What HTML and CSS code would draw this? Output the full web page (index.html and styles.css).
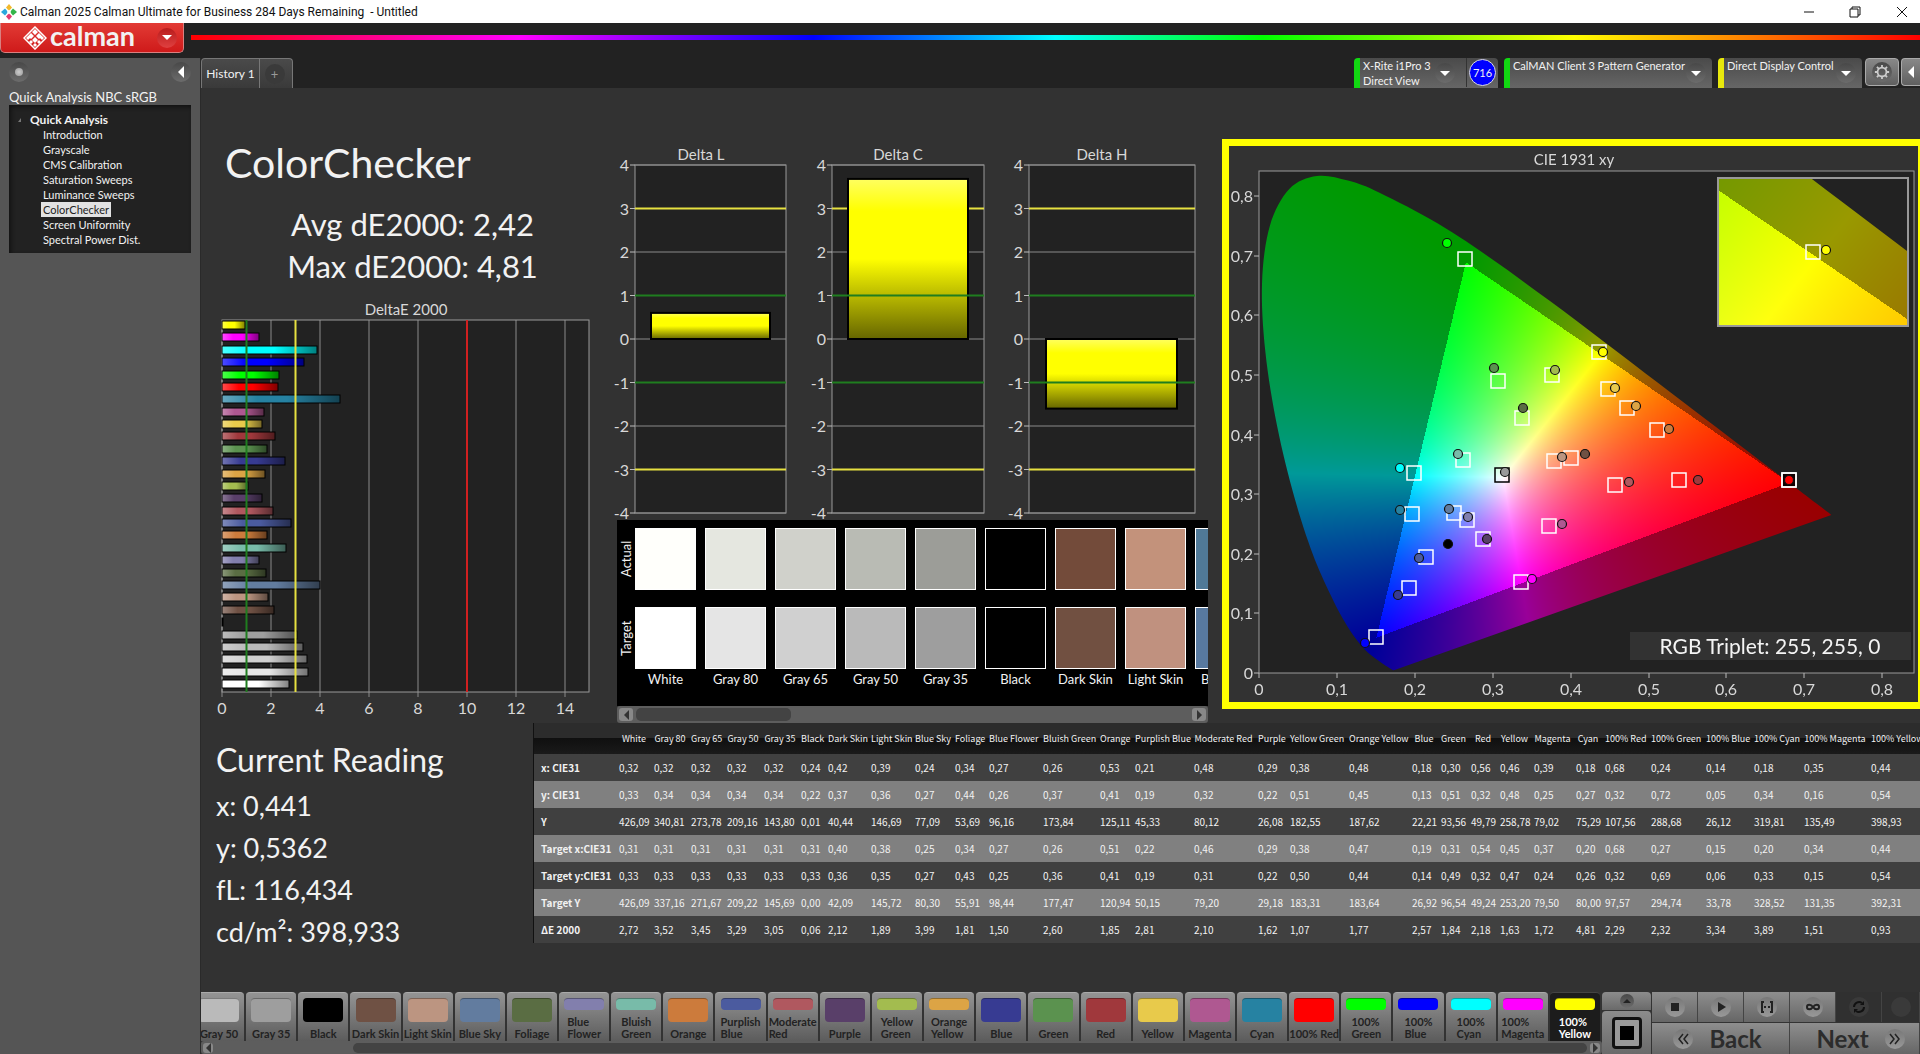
FILE: index.html
```html
<!DOCTYPE html>
<html lang="en">
<head>
<meta charset="utf-8">
<title>Calman 2025 Calman Ultimate for Business</title>
<link rel="stylesheet" href="styles.css">
</head>
<body>
<header class="titlebar">
  <svg class="app-icon" viewBox="0 0 16 16" aria-hidden="true">
    <path d="M8 0l3 3.500-3 3.500-3-3.500z" fill="#f2b92c"/>
    <path d="M4 4.500l3 3.500-3 3.500-4-3.500z" fill="#2ba7dd"/>
    <path d="M12 4.500l4 3.500-4 3.500-3-3.500z" fill="#35b44a"/>
    <path d="M8 9l3 3.500-3 3.500-3-3.500z" fill="#e33a6f"/>
    <path d="M8 5.500l2 2.500-2 2.500-2-2.500z" fill="#fff"/>
  </svg>
  <span class="window-title">Calman 2025 Calman Ultimate for Business 284 Days Remaining &nbsp;- Untitled</span>
  <div class="window-buttons">
    <button type="button" aria-label="Minimize"><svg viewBox="0 0 12 12"><path d="M1 6h10"/></svg></button>
    <button type="button" aria-label="Restore"><svg viewBox="0 0 12 12"><path d="M1 3h8v8H1zM3 3V1h8v8H9"/></svg></button>
    <button type="button" aria-label="Close"><svg viewBox="0 0 12 12"><path d="M1 1l10 10M11 1L1 11"/></svg></button>
  </div>
</header>

<div class="brandbar">
  <button type="button" class="brand">
    <svg class="brand-mark" viewBox="0 0 24 24" aria-hidden="true">
      <g fill="none" stroke="#fff" stroke-width="1.500"><path d="M12 1l11 11-11 11L1 12z"/></g>
      <g fill="#fff"><path d="M12 3l3 3-3 3-3-3zM8 7l3 3-3 3-3-3zM16 7l3 3-3 3-3-3zM12 11l3 3-3 3-3-3zM5 10l2 2-2 2-2-2zM19 10l2 2-2 2-2-2zM8 14l2 2-2 2-2-2zM16 14l2 2-2 2-2-2zM12 17l2 2-2 2-2-2z"/></g>
    </svg>
    <span class="brand-name">calman</span>
    <span class="knob knob-red"><i class="arrow-down"></i></span>
  </button>
  <div class="spectrum"></div>
</div>

<div class="app">
  <aside class="sidebar">
    <div class="sidebar-tools">
      <button type="button" class="knob" aria-label="Pin"><i class="dot"></i></button>
      <button type="button" class="knob" aria-label="Collapse"><i class="arrow-left"></i></button>
    </div>
    <h2 class="workflow">Quick Analysis NBC sRGB</h2>
    <nav class="tree">
      <p class="tree-root"><i class="tree-mark"></i>Quick Analysis</p>
      <ul>
        <li><a href="#">Introduction</a></li>
        <li><a href="#">Grayscale</a></li>
        <li><a href="#">CMS Calibration</a></li>
        <li><a href="#">Saturation Sweeps</a></li>
        <li><a href="#">Luminance Sweeps</a></li>
        <li><a href="#" class="current">ColorChecker</a></li>
        <li><a href="#">Screen Uniformity</a></li>
        <li><a href="#">Spectral Power Dist.</a></li>
      </ul>
    </nav>
  </aside>

  <div class="workspace">
    <div class="tabs">
      <div class="history">
        <button type="button" class="tab">History 1</button>
        <button type="button" class="tab-add" aria-label="Add history"><span class="knob">+</span></button>
      </div>
      <div class="devices">
        <div class="device device-green device-meter">
          <span>X-Rite i1Pro 3<br>Direct View</span>
          <button type="button" class="knob" aria-label="Meter menu"><i class="arrow-down"></i></button>
          <span class="badge-slot"><b class="badge">716</b></span>
        </div>
        <div class="device device-green device-source">
          <span>CalMAN Client 3 Pattern Generator</span>
          <button type="button" class="knob" aria-label="Source menu"><i class="arrow-down"></i></button>
        </div>
        <div class="device device-yellow device-display">
          <span>Direct Display Control</span>
          <button type="button" class="knob" aria-label="Display menu"><i class="arrow-down"></i></button>
        </div>
        <button type="button" class="tool" aria-label="Settings"><span class="knob"><svg viewBox="0 0 18 18" class="gear"><circle cx="9" cy="9" r="5"/><path d="M9 1v3M9 14v3M1 9h3M14 9h3M3.300 3.300l2.200 2.200M12.500 12.500l2.200 2.200M3.300 14.700l2.200-2.200M12.500 5.500l2.200-2.200"/></svg></span></button>
        <button type="button" class="tool tool-edge" aria-label="Collapse panel"><i class="arrow-left"></i></button>
      </div>
    </div>

    <main class="content">
      <div class="dashboard">
        <section class="summary">
          <h1>ColorChecker</h1>
          <p>Avg dE2000: 2,42</p>
          <p>Max dE2000: 4,81</p>
          <svg id="deltaE" class="chart" viewBox="0 0 416 432" role="img" aria-label="DeltaE 2000"></svg>
        </section>
        <section class="deltas">
          <svg id="deltaLCH" class="chart" viewBox="0 0 591 377" role="img" aria-label="Delta L, C and H"></svg>
          <div class="compare">
            <div class="compare-view">
              <div class="compare-side"><span>Actual</span><span>Target</span></div>
              <div class="compare-strip" id="strip"></div>
            </div>
            <div class="scrollbar">
              <button type="button" aria-label="Scroll left"><i class="mini-left"></i></button>
              <div class="track"><div class="thumb"></div></div>
              <button type="button" aria-label="Scroll right"><i class="mini-right"></i></button>
            </div>
          </div>
        </section>
        <section class="cie">
          <canvas id="gamut" width="689" height="556"></canvas>
          <svg id="cieAxes" viewBox="0 0 689 556" role="img" aria-label="CIE 1931 xy"></svg>
        </section>
      </div>

      <div class="readings">
        <section class="current-reading">
          <h2>Current Reading</h2>
          <p>x: 0,441</p>
          <p>y: 0,5362</p>
          <p>fL: 116,434</p>
          <p>cd/m²: 398,933</p>
        </section>
        <div class="table-wrap"><table id="results"></table></div>
      </div>
    </main>

    <footer class="footer">
      <div class="patterns">
        <div class="pattern-list" id="patterns"></div>
        <div class="scrollbar scrollbar-low">
          <button type="button" aria-label="Scroll left"><i class="mini-left"></i></button>
          <div class="track track-end"><div class="thumb"></div></div>
          <button type="button" aria-label="Scroll right"><i class="mini-right"></i></button>
        </div>
      </div>
      <div class="pattern-window">
        <button type="button" class="up" aria-label="Expand"><span class="knob"><i class="mini-up"></i></span></button>
        <button type="button" class="stop-big" aria-label="Pattern window"><i></i></button>
      </div>
      <div class="transport">
        <button type="button" aria-label="Stop"><span class="knob"><svg viewBox="0 0 16 16"><path d="M4 4h8v8H4z" fill="#222"/></svg></span></button>
        <button type="button" aria-label="Play"><span class="knob"><svg viewBox="0 0 16 16"><path d="M5 3l8 5-8 5z" fill="#222"/></svg></span></button>
        <button type="button" aria-label="Read series"><span class="knob"><svg viewBox="0 0 16 16"><path d="M5 3H3v10h2M11 3h2v10h-2M5 8h2M9 8h2" fill="none" stroke="#222" stroke-width="2"/></svg></span></button>
        <button type="button" aria-label="Read continuously"><span class="knob"><svg viewBox="0 0 16 16"><path d="M8 8C6 5 2 5 2 8s4 3 6 0 6-3 6 0-4 3-6 0" fill="none" stroke="#222" stroke-width="2"/></svg></span></button>
        <button type="button" class="off" aria-label="Refresh"><span class="knob"><svg viewBox="0 0 16 16"><path d="M3 8a5 5 0 0 1 8-4M13 8a5 5 0 0 1-8 4" fill="none" stroke="#111" stroke-width="2"/><path d="M9 6h4V2zM7 10H3v4z" fill="#111"/></svg></span></button>
        <button type="button" class="off" aria-label="Unused"><span class="knob"></span></button>
        <button type="button" class="step"><span class="knob"><svg viewBox="0 0 16 16"><path d="M8 3L4 8l4 5M13 3L9 8l4 5" fill="none" stroke="#222" stroke-width="1.500"/></svg></span>Back</button>
        <button type="button" class="step step-next">Next<span class="knob"><svg viewBox="0 0 16 16"><path d="M3 3l4 5-4 5M8 3l4 5-4 5" fill="none" stroke="#222" stroke-width="1.500"/></svg></span></button>
      </div>
    </footer>
  </div>
</div>
<script src="script.js"></script>
</body>
</html>
```
FILE: styles.css
```css
* { box-sizing: border-box; }
body {
  margin: 0;
  min-height: 100vh;
  display: flex;
  flex-direction: column;
  background: #222;
  color: #f2f2f2;
  font: 13px/16px Lato, "Open Sans", sans-serif;
  overflow-x: hidden;
}
button { margin: 0; padding: 0; border: 0; background: none; color: inherit; font: inherit; }
h1, h2, p, ul { margin: 0; padding: 0; font-weight: 400; }
ul { list-style: none; }

/* Window title */
.titlebar { display: flex; align-items: center; height: 23px; padding-left: 1px; background: #fff; color: #111; }
.app-icon { width: 16px; height: 16px; margin-right: 3px; }
.window-title { font: 12px/20px Roboto, "Open Sans", sans-serif; }
.window-buttons { display: flex; margin-left: auto; }
.window-buttons button { width: 46px; height: 20px; display: grid; place-items: center; }
.window-buttons button:last-child { width: 36px; margin-left: 6px; }
.window-buttons svg { width: 12px; height: 12px; fill: none; stroke: #111; stroke-width: 1; }

/* Brand */
.brandbar { display: flex; align-items: flex-start; height: 35px; }
.brand {
  display: flex; align-items: center; width: 184px; height: 30px; padding-left: 22px;
  background: linear-gradient(#e23b35, #cf1a1a);
  border: solid #d98080; border-width: 0 1px 1px; border-radius: 0 0 5px 5px;
}
.brand-mark { width: 24px; height: 24px; }
.brand-name { margin: 0 0 4px 3px; font: 700 27px/26px Lato, sans-serif; }
.spectrum {
  flex: 1; height: 5px; margin: 12px 0 0 7px;
  background: linear-gradient(90deg, #f00, #f0f 19%, #00f 36%, #0ff 50%, #0f0 62%, #ff0 80%, #f00);
}

/* Small round controls and arrows */
.knob {
  display: grid; place-items: center; flex: none; width: 20px; height: 20px; border-radius: 50%;
  background: linear-gradient(#484848, #6c6c6c);
}
.knob-red { margin: 0 6px 0 auto; background: linear-gradient(#b81c1c, #e04040); }
.arrow-down { border: 5px solid transparent; border-top-color: #fff; border-bottom: 0; }
.arrow-left { border: 6px solid transparent; border-right-color: #fff; border-left: 0; }
.mini-left { border: 5px solid transparent; border-right-color: #333; border-left: 0; }
.mini-right { border: 5px solid transparent; border-left-color: #333; border-right: 0; }
.mini-up { border: 4px solid transparent; border-bottom-color: #222; border-top: 0; }
.dot { width: 8px; height: 8px; border-radius: 50%; background: radial-gradient(#ccc, #999); }

.app { flex: 1; display: flex; }

/* Sidebar */
.sidebar { flex: none; width: 201px; padding: 4px 9px 0; background: #555; border-right: 1px solid #2a2a2a; }
.sidebar-tools { display: flex; justify-content: space-between; height: 24px; }
.workflow { margin-top: 3px; font-size: 13px; line-height: 16px; white-space: nowrap; }
.tree { height: 148px; padding: 7px 0 0 21px; background: #222; box-shadow: inset 2px 2px 4px #111; }
.tree-root { display: flex; align-items: center; gap: 9px; margin-left: -12px; font-weight: 700; font-size: 12px; line-height: 15px; }
.tree-mark { border: solid transparent; border-width: 0 0 4px 3px; border-bottom-color: #777; }
.tree ul { padding-left: 11px; font-size: 11px; line-height: 15px; }
.tree a { display: table; padding: 0 2px; color: #f2f2f2; text-decoration: none; }
.tree .current { background: #e2e2e2; color: #222; }

/* Tabs and devices */
.workspace { flex: 1; min-width: 0; display: flex; flex-direction: column; background: #323232; }
.tabs { display: flex; justify-content: space-between; height: 30px; background: #222; }
.history { display: flex; border: 1px solid #777; border-bottom: 0; border-radius: 4px 4px 0 0; background: linear-gradient(#4a4a4a, #3a3a3a); }
.tab { width: 58px; font-size: 12px; border-right: 1px solid #777; }
.tab-add { width: 32px; padding-right: 3px; display: grid; place-items: center; color: #999; }
.tab-add .knob { background: #3a3a3a; }
.devices { display: flex; gap: 6px; overflow: hidden; font-size: 11px; line-height: 15px; }
.device { display: flex; align-items: flex-start; justify-content: space-between; padding-left: 3px; border-left: 6px solid; border-radius: 4px 4px 0 0; background: linear-gradient(#4a4a4a, #666); }
.device > .knob { margin: 5px 6px 0 0; }
.device > span { white-space: nowrap; }
.device-green { border-left-color: #12d812; }
.device-yellow { border-left-color: #e8e80c; }
.device-meter { width: 144px; }
.device-source { width: 208px; }
.device-display { width: 144px; }
.badge-slot { padding: 1px 2px; border-left: 1px solid #333; }
.badge { display: grid; place-items: center; width: 27px; height: 27px; border: 1px solid #ddd; border-radius: 50%; background: #00f; font-weight: 400; }
.tool { width: 34px; height: 28px; display: grid; place-items: center; border: 1px solid #aaa; border-radius: 4px; background: linear-gradient(#888, #606060); margin-left: -3px; }
.tool-edge { width: 19px; margin-left: -4px; border-right: 0; border-radius: 4px 0 0 4px; }
.gear { width: 16px; height: 16px; fill: none; stroke: #ccc; stroke-width: 2; }

/* Dashboard */
.content { flex: 1; }
.dashboard { display: grid; grid-template-columns: minmax(0, 416fr) minmax(0, 605fr) minmax(0, 698fr); align-items: start; }
.chart { display: block; width: 100%; overflow: visible; }
.chart text, .cie text { font-family: Lato, "Open Sans", sans-serif; font-size: 16px; fill: #d8d8d8; }
.chart .title, .cie .title { font-size: 15px; }
.summary { padding-top: 49px; text-align: center; }
.summary h1 { padding-left: 24px; margin-bottom: 14px; font-size: 41px; line-height: 52px; text-align: left; }
.summary p { padding-left: 7px; font-size: 31px; line-height: 42px; }
.summary .chart { margin-top: 1px; }
.deltas { padding: 55px 14px 0 0; }

.compare-view { display: flex; height: 186px; padding-top: 8px; background: #000; overflow: hidden; }
.compare-side { flex: none; width: 18px; display: grid; grid-auto-rows: 62px; gap: 17px; justify-items: center; }
.compare-side span { writing-mode: vertical-rl; transform: rotate(180deg); text-align: center; }
.compare-strip { display: flex; gap: 9px; min-width: 0; overflow: hidden; }
.patch { flex: none; width: 61px; text-align: center; white-space: nowrap; }
.patch i { display: block; height: 62px; margin-bottom: 17px; border: 1px solid #fff; }
.patch i + i { margin-bottom: 2px; }

.scrollbar { display: flex; align-items: center; height: 17px; padding: 0 2px; background: #5d5d5d; border-radius: 3px; }
.scrollbar button { width: 14px; height: 13px; display: grid; place-items: center; background: #888; border-radius: 3px; }
.track { flex: 1; height: 13px; margin: 0 3px; }
.thumb { width: 28%; height: 13px; border-radius: 5px; background: #434343; }
.scrollbar-low { height: 13px; }
.scrollbar-low button, .scrollbar-low .track, .scrollbar-low .thumb { height: 10px; }
.scrollbar-low button { width: 10px; }
.track-end .thumb { width: 90%; margin-left: auto; }

.cie { display: grid; margin-top: 51px; border: 7px solid #ff0; border-right-width: 2px; }
.cie canvas, .cie svg { grid-area: 1 / 1; display: block; width: 100%; }
.cie .triplet { font-size: 21px; fill: #f4f4f4; }

/* Readings */
.readings { display: grid; grid-template-columns: minmax(0, 332fr) minmax(0, 1387fr); align-items: start; }
.current-reading { padding: 15px 0 0 15px; font-size: 27px; line-height: 42px; }
.current-reading h2 { margin-bottom: 3px; font-size: 32px; line-height: 44px; }
.table-wrap { border-left: 1px solid #111; overflow: hidden; }
#results { width: 100%; border-collapse: collapse; table-layout: fixed; font: 10px/16px "Noto Sans CJK SC", "Open Sans", sans-serif; }
#results th, #results td { height: 27px; padding: 0; text-align: left; font-weight: 400; white-space: nowrap; }
#results thead th { height: 31px; padding-right: 5px; font-size: 9px; text-align: center; background: linear-gradient(#2c2c2c 50%, #101010 50%, #1a1a1a); }
#results tbody th { padding-left: 7px; font-weight: 700; }
#results tbody tr { background: #404040; }
#results tbody tr:nth-child(even) { background: #808080; }

/* Footer */
.footer { display: flex; height: 62px; background: #333; }
.patterns { flex: 1; min-width: 0; overflow: hidden; }
.pattern-list { display: grid; grid-template-columns: repeat(27, minmax(0, 1fr)); margin-left: -7px; }
.pattern {
  display: flex; flex-direction: column; align-items: center; justify-content: space-between;
  height: 49px; margin-right: 2px; padding: 5px 0 1px; overflow: hidden;
  border-radius: 4px 4px 0 0; border-top: 1px solid #aaa;
  background: linear-gradient(#949494, #5c5c5c); color: #222; font-size: 11px; line-height: 12px; font-weight: 700; text-align: left;
}
.pattern i { width: 40px; height: 24px; border-radius: 4px; border-top: 1px solid #0005; }
.pattern .short { height: 12px; }
.pattern.selected { background: #1c1c1c; color: #fff; border-color: #444; }
.pattern-window { flex: none; width: 49px; display: grid; grid-template-rows: 18px 1fr; gap: 1px; }
.pattern-window button { display: grid; place-items: center; border-radius: 4px 4px 0 0; background: linear-gradient(#8c8c8c, #6a6a6a); }
.pattern-window .knob { width: 14px; height: 14px; }
.stop-big i { width: 30px; height: 32px; border: 3px solid #111; border-radius: 4px; background: linear-gradient(#000, #000) center / 14px 14px no-repeat, #999; }
.transport { flex: none; width: 268px; display: grid; grid-template-columns: repeat(5, 46px) 1fr; grid-template-rows: 30px 31px; gap: 1px 0; margin-left: 1px; }
.transport button { display: flex; align-items: center; justify-content: center; border-right: 1px solid #444; background: linear-gradient(#8e8e8e, #666); color: #2c2c2c; }
.transport .knob { background: linear-gradient(#777, #999); }
.transport svg { width: 16px; height: 16px; }
.transport .off { background: #303030; }
.transport .off .knob { background: #3a3a3a; }
.transport .step { grid-column: span 3; gap: 16px; padding-right: 6px; font-size: 24px; font-weight: 700; line-height: 28px; }
.transport .step-next { padding: 0 0 0 12px; }
```
FILE: script.js
```js
const NAMES = ['White', 'Gray 80', 'Gray 65', 'Gray 50', 'Gray 35', 'Black', 'Dark Skin', 'Light Skin', 'Blue Sky', 'Foliage',
  'Blue Flower', 'Bluish Green', 'Orange', 'Purplish Blue', 'Moderate Red', 'Purple', 'Yellow Green', 'Orange Yellow',
  'Blue', 'Green', 'Red', 'Yellow', 'Magenta', 'Cyan',
  '100% Red', '100% Green', '100% Blue', '100% Cyan', '100% Magenta', '100% Yellow'];
const COLORS = ['#ffffff', '#e5e5e5', '#d0d0d0', '#bababa', '#9e9e9e', '#000000', '#6f5144', '#bc9581', '#627c9f', '#5a6d43',
  '#827fad', '#78bba9', '#cc7b3c', '#4b5b9f', '#b0585f', '#593f69', '#a3bc4f', '#dca445',
  '#373b92', '#5b924f', '#a0383c', '#e8ca4b', '#af5891', '#2682a2',
  '#ff0000', '#00ff00', '#0000ff', '#00ffff', '#ff00ff', '#ffff00'];
const WIDTHS = [35, 37, 36, 37, 37, 27, 43, 44, 40, 34, 54, 57, 35, 59, 64, 32, 59, 63, 29, 30, 29, 34, 42, 29, 46, 55, 48, 50, 67, 49];
const ROWS = {
  'x: CIE31': '0,32 0,32 0,32 0,32 0,32 0,24 0,42 0,39 0,24 0,34 0,27 0,26 0,53 0,21 0,48 0,29 0,38 0,48 0,18 0,30 0,56 0,46 0,39 0,18 0,68 0,24 0,14 0,18 0,35 0,44',
  'y: CIE31': '0,33 0,34 0,34 0,34 0,34 0,22 0,37 0,36 0,27 0,44 0,26 0,37 0,41 0,19 0,32 0,22 0,51 0,45 0,13 0,51 0,32 0,48 0,25 0,27 0,32 0,72 0,05 0,34 0,16 0,54',
  'Y': '426,09 340,81 273,78 209,16 143,80 0,01 40,44 146,69 77,09 53,69 96,16 173,84 125,11 45,33 80,12 26,08 182,55 187,62 22,21 93,56 49,79 258,78 79,02 75,29 107,56 288,68 26,12 319,81 135,49 398,93',
  'Target x:CIE31': '0,31 0,31 0,31 0,31 0,31 0,31 0,40 0,38 0,25 0,34 0,27 0,26 0,51 0,22 0,46 0,29 0,38 0,47 0,19 0,31 0,54 0,45 0,37 0,20 0,68 0,27 0,15 0,20 0,34 0,44',
  'Target y:CIE31': '0,33 0,33 0,33 0,33 0,33 0,33 0,36 0,35 0,27 0,43 0,25 0,36 0,41 0,19 0,31 0,22 0,50 0,44 0,14 0,49 0,32 0,47 0,24 0,26 0,32 0,69 0,06 0,33 0,15 0,54',
  'Target Y': '426,09 337,16 271,67 209,22 145,69 0,00 42,09 145,72 80,30 55,91 98,44 177,47 120,94 50,15 79,20 29,18 183,31 183,64 26,92 96,54 49,24 253,20 79,50 80,00 97,57 294,74 33,78 328,52 131,35 392,31',
  'ΔE 2000': '2,72 3,52 3,45 3,29 3,05 0,06 2,12 1,89 3,99 1,81 1,50 2,60 1,85 2,81 2,10 1,62 1,07 1,77 2,57 1,84 2,18 1,63 1,72 4,81 2,29 2,32 3,34 3,89 1,51 0,93'
};
const DELTA_E = ROWS['ΔE 2000'].split(' ').map(v => parseFloat(v.replace(',', '.')));

const line = (x1, y1, x2, y2, color, w = 1) =>
  `<line x1="${x1}" y1="${y1}" x2="${x2}" y2="${y2}" stroke="${color}" stroke-width="${w}"/>`;
const label = (x, y, text, anchor = 'middle', cls = '') =>
  `<text x="${x}" y="${y}" text-anchor="${anchor}" class="${cls}">${text}</text>`;
const GRID = '#8a8a8a', GREEN = '#1f7d1f', YELLOW = '#e6e040';

/* Results table */
document.getElementById('results').innerHTML =
  `<colgroup><col style="width:85px">${WIDTHS.map(w => `<col style="width:${w}px">`).join('')}</colgroup>` +
  `<thead><tr><th></th>${NAMES.map(n => `<th scope="col">${n}</th>`).join('')}</tr></thead><tbody>` +
  Object.entries(ROWS).map(([name, values]) =>
    `<tr><th scope="row">${name}</th>${values.split(' ').map(v => `<td>${v}</td>`).join('')}</tr>`).join('') + '</tbody>';

/* Actual against target patches */
const ACTUAL = ['#fffffb', '#e5e7e0', '#d0d1cb', '#b9bbb4', '#9c9d98', '#000000', '#734b3a', '#c3927b', '#507997'];
const TARGET = ['#ffffff', '#e5e5e5', '#d0d0d0', '#bababa', '#9e9e9e', '#000000', '#715041', '#c0917f', '#58799f'];
document.getElementById('strip').innerHTML = ACTUAL.map((c, i) =>
  `<div class="patch"><i style="background:${c}"></i><i style="background:${TARGET[i]}"></i>${NAMES[i]}</div>`).join('');

/* Pattern buttons */
const TWO_LINES = [10, 11, 13, 14, 16, 17, 25, 26, 27, 28, 29];
document.getElementById('patterns').innerHTML = NAMES.map((n, i) => {
  if (i < 3) return '';
  const two = TWO_LINES.includes(i);
  return `<button type="button" class="pattern${i === 29 ? ' selected' : ''}"><i class="${two ? 'short' : ''}" style="background:${COLORS[i]}"></i><span>${two ? n.replace(' ', '<br>') : n.replace(' ', '&nbsp;')}</span></button>`;
}).join('');

/* DeltaE 2000 bars */
(() => {
  const x0 = 21, y0 = 32, w = 367, h = 372, unit = 24.5;
  let s = '<defs><linearGradient id="shade"><stop offset="0" stop-color="#fff" stop-opacity=".3"/><stop offset=".3" stop-color="#fff" stop-opacity="0"/><stop offset=".55" stop-opacity="0"/><stop offset="1" stop-opacity=".5"/></linearGradient></defs>';
  s += `<rect x="${x0}" y="${y0}" width="${w}" height="${h}" fill="#222"/>`;
  s += label(205, 27, 'DeltaE 2000', 'middle', 'title');
  for (let v = 0; v <= 14; v += 2) {
    const x = x0 + v * unit;
    s += line(x, y0, x, y0 + h + 5, GRID) + label(x, y0 + h + 22, v);
  }
  s += `<rect x="${x0}" y="${y0}" width="${w}" height="${h}" fill="none" stroke="#999"/>`;
  [...DELTA_E].reverse().forEach((v, i) => {
    const y = y0 + 1 + Math.round(i * 12.38), bw = Math.max(1, Math.round(v * unit));
    const c = COLORS[COLORS.length - 1 - i];
    s += `<rect x="${x0}" y="${y}" width="${bw}" height="8" fill="${c}"/><rect x="${x0}" y="${y}" width="${bw}" height="8" fill="url(#shade)" stroke="#000"/>`;
  });
  s += line(x0 + unit, y0, x0 + unit, y0 + h, GREEN, 2) + line(x0 + 3 * unit, y0, x0 + 3 * unit, y0 + h, YELLOW, 2) +
       line(x0 + 10 * unit, y0, x0 + 10 * unit, y0 + h, '#d02020', 2);
  document.getElementById('deltaE').innerHTML = s;
})();

/* Delta L, C, H */
(() => {
  const top = 22, unit = 43.5;
  let s = '<defs><linearGradient id="yellowBar" x2="0" y2="1"><stop offset="0" stop-color="#ffff60"/><stop offset=".2" stop-color="#ff0"/><stop offset=".5" stop-color="#ff0"/><stop offset="1" stop-color="#666600"/></linearGradient></defs>';
  const y = v => top + (4 - v) * unit;
  [['Delta L', 18, 151, 84, 34, 119, .6], ['Delta C', 215, 152, 281, 231, 120, 3.68], ['Delta H', 412, 166, 485, 429, 131, -1.6]]
    .forEach(([name, x, w, tx, bx, bw, val]) => {
      s += label(tx, 17, name, 'middle', 'title') + `<rect x="${x}" y="${top}" width="${w}" height="${8 * unit}" fill="#222" stroke="#999"/>`;
      for (let v = -4; v <= 4; v++) {
        s += line(x - 5, y(v), x, y(v), '#bbb') + label(x - 6, y(v) + 6, v, 'end');
        if (v % 2 === 0) s += line(x, y(v), x + w, y(v), GRID);
      }
      s += line(x, y(3), x + w, y(3), YELLOW, 2) + line(x, y(-3), x + w, y(-3), YELLOW, 2);
      s += `<rect x="${bx}" y="${y(Math.max(val, 0))}" width="${bw}" height="${Math.abs(val) * unit}" fill="url(#yellowBar)" stroke="#000" stroke-width="2"/>`;
      s += line(x, y(1), x + w, y(1), GREEN, 2) + line(x, y(-1), x + w, y(-1), GREEN, 2);
    });
  document.getElementById('deltaLCH').innerHTML = s;
})();

/* CIE 1931 diagram */
const PLOT = { x: 30, y: 25, w: 655, h: 502, ux: 779, uy: 596 };
const INSET = { x: 489, y: 32, w: 190, h: 148, zoom: 5, cx: .437, cy: .5375 };
const LOCUS = [[.1741, .005], [.1714, .0051], [.1644, .0109], [.1566, .0177], [.144, .0297], [.1355, .0399], [.1241, .0578], [.1096, .0868],
  [.0913, .1327], [.0687, .2007], [.0454, .295], [.0235, .4127], [.0082, .5384], [.0039, .6548], [.0139, .7502], [.0389, .812], [.0743, .8338],
  [.1142, .8262], [.1547, .8059], [.2296, .7543], [.3016, .6923], [.3731, .6245], [.4441, .5547], [.5125, .4866], [.5752, .4242], [.627, .3725],
  [.6658, .334], [.6915, .3083], [.719, .2809], [.7347, .2653]];

function colorAt(x, y) {
  const X = x, Y = y, Z = 1 - x - y;
  const r = 2.4935 * X - .9314 * Y - .4027 * Z, g = -.8295 * X + 1.7627 * Y + .0236 * Z, b = .0358 * X - .0762 * Y + .9569 * Z;
  const inside = r >= 0 && g >= 0 && b >= 0, k = (inside ? 255 : 153) / Math.max(r, g, b);
  return [Math.max(0, r) * k, Math.max(0, g) * k, Math.max(0, b) * k];
}

function drawField(ctx, ox, oy, w, h, toXY, toPx) {
  const layer = document.createElement('canvas');
  layer.width = w; layer.height = h;
  const lc = layer.getContext('2d'), img = lc.createImageData(w, h);
  for (let j = 0, p = 0; j < h; j++) for (let i = 0; i < w; i++, p += 4) {
    const c = colorAt(...toXY(i, j));
    img.data[p] = c[0]; img.data[p + 1] = c[1]; img.data[p + 2] = c[2]; img.data[p + 3] = 255;
  }
  lc.putImageData(img, 0, 0);
  ctx.save();
  ctx.beginPath(); ctx.rect(ox, oy, w, h); ctx.clip();
  ctx.fillStyle = '#222'; ctx.fillRect(ox, oy, w, h);
  const pts = LOCUS.map(([x, y]) => toPx(x, y).map((v, k) => v + (k ? oy : ox)));
  ctx.beginPath(); ctx.moveTo(...pts[0]);
  for (let k = 0; k < pts.length - 1; k++) {
    const a = pts[Math.max(0, k - 1)], b = pts[k], c = pts[k + 1], d = pts[Math.min(pts.length - 1, k + 2)];
    ctx.bezierCurveTo(b[0] + (c[0] - a[0]) / 6, b[1] + (c[1] - a[1]) / 6, c[0] - (d[0] - b[0]) / 6, c[1] - (d[1] - b[1]) / 6, c[0], c[1]);
  }
  ctx.closePath(); ctx.clip();
  ctx.drawImage(layer, ox, oy);
  ctx.restore();
}

(() => {
  const ctx = document.getElementById('gamut').getContext('2d');
  drawField(ctx, PLOT.x, PLOT.y, PLOT.w, PLOT.h,
    (i, j) => [i / PLOT.ux, (PLOT.h - j) / PLOT.uy], (x, y) => [x * PLOT.ux, PLOT.h - y * PLOT.uy]);
  const zx = PLOT.ux * INSET.zoom, zy = PLOT.uy * INSET.zoom;
  drawField(ctx, INSET.x, INSET.y, INSET.w, INSET.h,
    (i, j) => [INSET.cx + (i - INSET.w / 2) / zx, INSET.cy - (j - INSET.h / 2) / zy],
    (x, y) => [(x - INSET.cx) * zx + INSET.w / 2, INSET.h / 2 - (y - INSET.cy) * zy]);
})();

(() => {
  const targets = [[.264, .694], [.307, .49], [.376, .5], [.338, .428], [.262, .358], [.199, .335], [.196, .266], [.25, .269], [.267, .257],
    [.287, .225], [.215, .195], [.193, .143], [.15, .061], [.336, .152], [.372, .247], [.379, .356], [.437, .538], [.448, .476], [.472, .445],
    [.511, .407], [.401, .361], [.457, .316], [.539, .323], [.681, .323]];
  const measured = [[.241, .722, 25], [.302, .512, 19], [.38, .509, 16], [.339, .445, 9], [.255, .368, 11], [.181, .344, 27], [.181, .273, 23],
    [.244, .276, 8], [.268, .261, 10], [.293, .224, 15], [.242, .216, 5], [.206, .193, 13], [.179, .131, 18], [.136, .051, 26], [.351, .158, 28],
    [.389, .25, 22], [.389, .363, 7], [.441, .538, 29], [.457, .479, 21], [.484, .448, 17], [.526, .41, 12], [.419, .367, 6], [.475, .32, 14],
    [.564, .323, 20], [.68, .323, 24]];
  const px = x => Math.round(PLOT.x + x * PLOT.ux), py = y => Math.round(PLOT.y + PLOT.h - y * PLOT.uy);
  const square = (x, y, stroke, fill = 'none') => `<rect x="${x - 7}" y="${y - 7}" width="14" height="14" fill="${fill}" stroke="${stroke}" stroke-width="1.500"/>`;
  const dot = (x, y, fill) => `<circle cx="${x}" cy="${y}" r="4.500" fill="${fill}" stroke="#111" stroke-width="1.200"/>`;
  const bottom = PLOT.y + PLOT.h;
  let s = `<rect x="${PLOT.x}" y="${PLOT.y}" width="${PLOT.w}" height="${PLOT.h}" fill="none" stroke="#999"/>` + label(345, 19, 'CIE 1931 xy', 'middle', 'title');
  for (let i = 0; i <= 8; i++) {
    const t = i ? `0,${i}` : '0', x = px(i / 10), y = py(i / 10);
    s += line(x, bottom, x, bottom + 5, '#bbb') + label(x, bottom + 22, t);
    s += line(PLOT.x - 5, y, PLOT.x, y, '#bbb') + label(PLOT.x - 6, y + 6, t, 'end');
  }
  s += square(px(.681), py(.323), '#fff', '#100');
  targets.forEach(([x, y]) => { s += square(px(x), py(y), '#fff'); });
  s += square(px(.3125), py(.332), '#000') + dot(px(.316), py(.338), '#9a9a9a');
  measured.forEach(([x, y, c]) => { s += dot(px(x), py(y), COLORS[c]); });
  const ix = INSET.x + 95, iy = INSET.y + 74;
  s += `<rect x="${INSET.x}" y="${INSET.y}" width="${INSET.w}" height="${INSET.h}" fill="none" stroke="#999" stroke-width="2"/>`;
  s += square(ix, iy, '#fff') + dot(ix + 13, iy - 2, '#ff0');
  s += '<rect x="401" y="486" width="281" height="28" fill="#323232"/>' + label(541, 508, 'RGB Triplet: 255, 255, 0', 'middle', 'triplet');
  document.getElementById('cieAxes').innerHTML = s;
})();
```
